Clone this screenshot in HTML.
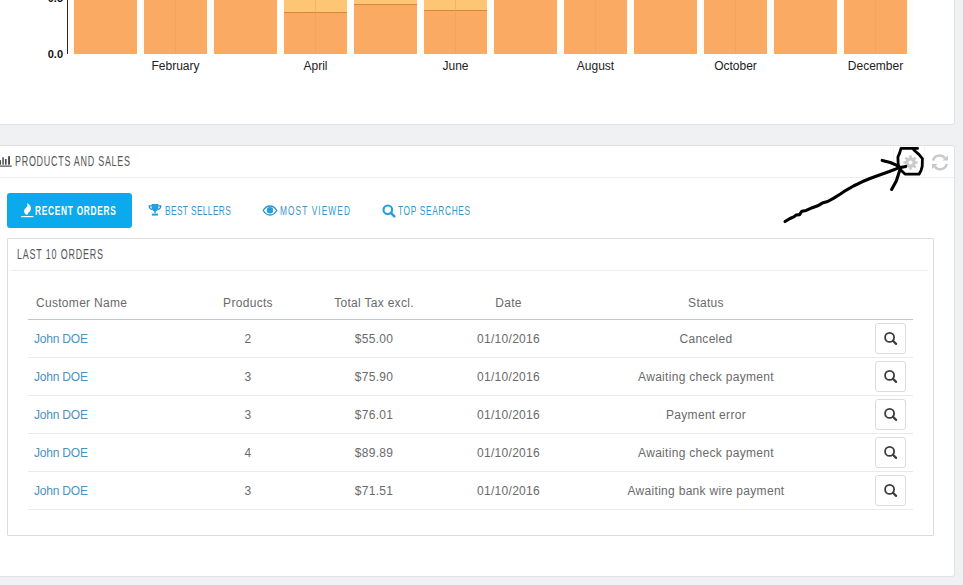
<!DOCTYPE html>
<html><head><meta charset="utf-8">
<style>
html,body{margin:0;padding:0}
body{width:963px;height:585px;overflow:hidden;position:relative;background:#eff1f2;font-family:"Liberation Sans",sans-serif;}
.panel{position:absolute;background:#fff;border:1px solid #dfe1e3;border-radius:3px;box-sizing:border-box}
#p1{left:-6px;top:-20px;width:961px;height:145px}
#p2{left:-6px;top:145px;width:961px;height:432px}
.abs{position:absolute;white-space:nowrap}
.cond{display:inline-block;transform-origin:0 0}
.tab{color:#3794cb;font-size:13px}
.th{font-size:12px;color:#6a6a6a;line-height:16px;letter-spacing:0.3px}
.td{font-size:12px;color:#6a6a6a;line-height:16px;letter-spacing:0.3px}
.lnk{color:#4a92c2;letter-spacing:-0.2px}
.btn{position:absolute;left:875px;width:31px;height:31px;box-sizing:border-box;border:1px solid #dcdcdc;border-radius:3px;background:#fff}
.rowline{position:absolute;left:28px;width:885px;height:1px;background:#eaeaea}
.head{font-size:14px;color:#555;line-height:16px}
</style></head>
<body>
<div class="panel" id="p1"></div>
<div class="panel" id="p2"></div>
<svg class="abs" style="left:0;top:0" width="963" height="130">
<rect x="68" y="-5" width="845" height="59" fill="#fffdf8"/>
<rect x="74" y="-5" width="63" height="59" fill="#faaa62"/><rect x="144" y="-5" width="63" height="59" fill="#faaa62"/><rect x="214" y="-5" width="63" height="59" fill="#faaa62"/><rect x="284" y="-5" width="63" height="59" fill="#faaa62"/><rect x="354" y="-5" width="63" height="59" fill="#faaa62"/><rect x="424" y="-5" width="63" height="59" fill="#faaa62"/><rect x="494" y="-5" width="63" height="59" fill="#faaa62"/><rect x="564" y="-5" width="63" height="59" fill="#faaa62"/><rect x="634" y="-5" width="63" height="59" fill="#faaa62"/><rect x="704" y="-5" width="63" height="59" fill="#faaa62"/><rect x="774" y="-5" width="63" height="59" fill="#faaa62"/><rect x="844" y="-5" width="63" height="59" fill="#faaa62"/><rect x="284" y="-5" width="63" height="17" fill="#fcc674"/><rect x="284" y="12" width="63" height="1" fill="#d9863a"/><rect x="354" y="-5" width="63" height="9" fill="#fcc674"/><rect x="354" y="4" width="63" height="1" fill="#d9863a"/><rect x="424" y="-5" width="63" height="15" fill="#fcc674"/><rect x="424" y="10" width="63" height="1" fill="#d9863a"/><rect x="175" y="-5" width="1" height="59" fill="#e8a060" opacity="0.45"/><rect x="315" y="-5" width="1" height="59" fill="#e8a060" opacity="0.45"/><rect x="455" y="-5" width="1" height="59" fill="#e8a060" opacity="0.45"/><rect x="595" y="-5" width="1" height="59" fill="#e8a060" opacity="0.45"/><rect x="735" y="-5" width="1" height="59" fill="#e8a060" opacity="0.45"/><rect x="875" y="-5" width="1" height="59" fill="#e8a060" opacity="0.45"/>
<rect x="67" y="-5" width="1" height="59" fill="#2a2a2a"/>

<text x="63" y="58" text-anchor="end" font-size="11" font-weight="bold" fill="#111">0.0</text>
<text x="63" y="2" text-anchor="end" font-size="11" font-weight="bold" fill="#111">0.5</text>
<text x="175.5" y="70" text-anchor="middle" font-size="12" fill="#222">February</text><text x="315.5" y="70" text-anchor="middle" font-size="12" fill="#222">April</text><text x="455.5" y="70" text-anchor="middle" font-size="12" fill="#222">June</text><text x="595.5" y="70" text-anchor="middle" font-size="12" fill="#222">August</text><text x="735.5" y="70" text-anchor="middle" font-size="12" fill="#222">October</text><text x="875.5" y="70" text-anchor="middle" font-size="12" fill="#222">December</text>
</svg>
<!-- panel 2 heading -->
<div class="abs" style="left:0;top:177px;width:954px;height:1px;background:#eee"></div>
<div class="abs" style="left:893px;top:146px;width:1px;height:31px;background:#f4f4f4"></div>
<div class="abs" style="left:924px;top:146px;width:1px;height:31px;background:#f4f4f4"></div>
<svg class="abs" style="left:0;top:156px" width="12" height="11" viewBox="0 0 12 11"><g fill="#4a4a4a"><rect x="0" y="9.5" width="11.7" height="1.2"/><rect x="0" y="4.2" width="1" height="4.5"/><rect x="2.3" y="1.3" width="1.5" height="7.4"/><rect x="5" y="3" width="1.6" height="5.7"/><rect x="8.1" y="0.2" width="1.9" height="8.5"/></g></svg>
<div class="abs head" style="left:15px;top:153px"><span class="cond" style="transform:scaleX(0.64);letter-spacing:1.143px">PRODUCTS AND SALES</span></div>
<svg class="abs" style="left:903px;top:155px" width="15" height="15" viewBox="0 0 15 15">
<g fill="#cacaca"><circle cx="7.5" cy="7.5" r="5.2"/><rect x="6.2" y="0.3" width="2.6" height="14.4" rx="0.6" transform="rotate(0 7.5 7.5)"/><rect x="6.2" y="0.3" width="2.6" height="14.4" rx="0.6" transform="rotate(45 7.5 7.5)"/><rect x="6.2" y="0.3" width="2.6" height="14.4" rx="0.6" transform="rotate(90 7.5 7.5)"/><rect x="6.2" y="0.3" width="2.6" height="14.4" rx="0.6" transform="rotate(135 7.5 7.5)"/></g><circle cx="7.5" cy="7.5" r="2.1" fill="#fff"/></svg>
<svg class="abs" style="left:926px;top:150px" width="28" height="25" viewBox="0 0 28 25">
<g fill="none" stroke="#c9c9c9" stroke-width="2.5">
<path d="M7 10.6 C7.8 7.4 10.4 5.4 13.8 5.4 C16 5.4 17.6 6.3 19 8.2"/>
<path d="M20.8 14 C20 17.2 17.4 19.2 14 19.2 C11.8 19.2 10.2 18.3 8.8 16.4"/>
</g>
<g fill="#c9c9c9">
<path d="M22 5.4 L22 10.6 L16.4 10.6 Z"/>
<path d="M6 13.9 L11.6 13.9 L6 19.1 Z"/>
</g>
</svg>
<!-- tabs -->
<div class="abs" style="left:7px;top:193px;width:125px;height:35px;background:#0aaaed;border-radius:3px"></div>
<div class="abs tab" style="left:35px;top:203px;color:#fff;font-weight:bold"><span class="cond" style="transform:scaleX(0.64);letter-spacing:1.145px">RECENT ORDERS</span></div>
<div class="abs tab" style="left:165px;top:203px"><span class="cond" style="transform:scaleX(0.64);letter-spacing:0.634px">BEST SELLERS</span></div>
<div class="abs tab" style="left:280px;top:203px"><span class="cond" style="transform:scaleX(0.64);letter-spacing:1.707px">MOST VIEWED</span></div>
<div class="abs tab" style="left:398px;top:203px"><span class="cond" style="transform:scaleX(0.64);letter-spacing:1.020px">TOP SEARCHES</span></div>

<svg class="abs" style="left:21px;top:202px" width="13" height="16" viewBox="0 0 13 16">
<path d="M6.2 1 C8.2 2 10 4 10 6.6 C10 8.6 8.6 9.6 7.6 10.6 C7 11.2 6.6 12 6.3 13 C4.6 12.6 3.1 11.2 3.1 9 C3.1 7 5.1 6 6.2 4.6 C6.6 3.6 6.5 2.2 6.2 1 Z" fill="#fff"/>
<rect x="0.2" y="14" width="12.3" height="1.2" fill="#fff"/>
</svg>
<svg class="abs" style="left:148px;top:203px" width="14" height="13" viewBox="0 0 14 13">
<g fill="#1ea3dc">
<path d="M3.5 1 H10.5 V3.5 C10.5 6.5 9 8 7.7 8.4 V10.2 H6.3 V8.4 C5 8 3.5 6.5 3.5 3.5 Z"/>
<rect x="4" y="10.6" width="6" height="2"/>
</g>
<path d="M3.6 2.8 H1.2 C1.2 5 2.3 6.2 4.3 6.6 M10.4 2.8 H12.8 C12.8 5 11.7 6.2 9.7 6.6" fill="none" stroke="#2a8fc4" stroke-width="1.2"/>
</svg>
<svg class="abs" style="left:262px;top:205px" width="16" height="11" viewBox="0 0 16 11">
<path d="M1.2 5.5 C3 2.4 5.3 1 8 1 C10.7 1 13 2.4 14.8 5.5 C13 8.6 10.7 10 8 10 C5.3 10 3 8.6 1.2 5.5 Z" fill="none" stroke="#2a90c8" stroke-width="1.3"/>
<circle cx="8" cy="5.2" r="3.2" fill="#1ea3dc"/>
</svg>
<svg class="abs" style="left:382px;top:204px" width="14" height="14" viewBox="0 0 14 14">
<circle cx="5.8" cy="5.8" r="4.3" fill="none" stroke="#2a9fd6" stroke-width="2.2"/>
<line x1="8.9" y1="8.9" x2="12.3" y2="12.3" stroke="#2a9fd6" stroke-width="2.6" stroke-linecap="round"/>
</svg>
<!-- inner panel -->
<div class="abs" style="left:7px;top:238px;width:927px;height:298px;box-sizing:border-box;border:1px solid #dcdcdc;border-radius:1px;background:#fff"></div>
<div class="abs" style="left:11px;top:270px;width:917px;height:1px;background:#eee"></div>
<div class="abs head" style="left:17px;top:246px"><span class="cond" style="transform:scaleX(0.64);letter-spacing:1.264px">LAST 10 ORDERS</span></div>
<div class="abs th" style="left:36px;top:295px">Customer Name</div><div class="abs th" style="left:98px;top:295px;width:300px;text-align:center">Products</div><div class="abs th" style="left:224px;top:295px;width:300px;text-align:center">Total Tax excl.</div><div class="abs th" style="left:358.5px;top:295px;width:300px;text-align:center">Date</div><div class="abs th" style="left:556px;top:295px;width:300px;text-align:center">Status</div><div class="abs" style="left:28px;top:319px;width:885px;height:1px;background:#b5cbd2"></div><div class="abs td lnk" style="left:34px;top:331px">John DOE</div><div class="abs td" style="left:98px;top:331px;width:300px;text-align:center">2</div><div class="abs td" style="left:224px;top:331px;width:300px;text-align:center">$55.00</div><div class="abs td" style="left:358.5px;top:331px;width:300px;text-align:center">01/10/2016</div><div class="abs td" style="left:556px;top:331px;width:300px;text-align:center">Canceled</div><div class="btn" style="top:323px"><svg width="14" height="14" viewBox="0 0 14 14" style="position:absolute;left:8px;top:8px"><circle cx="5.6" cy="5.4" r="4.5" fill="none" stroke="#3c3c3c" stroke-width="1.8"/><line x1="8.9" y1="8.7" x2="12.1" y2="11.9" stroke="#3c3c3c" stroke-width="2.2" stroke-linecap="round"/></svg></div><div class="rowline" style="top:357px"></div><div class="abs td lnk" style="left:34px;top:369px">John DOE</div><div class="abs td" style="left:98px;top:369px;width:300px;text-align:center">3</div><div class="abs td" style="left:224px;top:369px;width:300px;text-align:center">$75.90</div><div class="abs td" style="left:358.5px;top:369px;width:300px;text-align:center">01/10/2016</div><div class="abs td" style="left:556px;top:369px;width:300px;text-align:center">Awaiting check payment</div><div class="btn" style="top:361px"><svg width="14" height="14" viewBox="0 0 14 14" style="position:absolute;left:8px;top:8px"><circle cx="5.6" cy="5.4" r="4.5" fill="none" stroke="#3c3c3c" stroke-width="1.8"/><line x1="8.9" y1="8.7" x2="12.1" y2="11.9" stroke="#3c3c3c" stroke-width="2.2" stroke-linecap="round"/></svg></div><div class="rowline" style="top:395px"></div><div class="abs td lnk" style="left:34px;top:407px">John DOE</div><div class="abs td" style="left:98px;top:407px;width:300px;text-align:center">3</div><div class="abs td" style="left:224px;top:407px;width:300px;text-align:center">$76.01</div><div class="abs td" style="left:358.5px;top:407px;width:300px;text-align:center">01/10/2016</div><div class="abs td" style="left:556px;top:407px;width:300px;text-align:center">Payment error</div><div class="btn" style="top:399px"><svg width="14" height="14" viewBox="0 0 14 14" style="position:absolute;left:8px;top:8px"><circle cx="5.6" cy="5.4" r="4.5" fill="none" stroke="#3c3c3c" stroke-width="1.8"/><line x1="8.9" y1="8.7" x2="12.1" y2="11.9" stroke="#3c3c3c" stroke-width="2.2" stroke-linecap="round"/></svg></div><div class="rowline" style="top:433px"></div><div class="abs td lnk" style="left:34px;top:445px">John DOE</div><div class="abs td" style="left:98px;top:445px;width:300px;text-align:center">4</div><div class="abs td" style="left:224px;top:445px;width:300px;text-align:center">$89.89</div><div class="abs td" style="left:358.5px;top:445px;width:300px;text-align:center">01/10/2016</div><div class="abs td" style="left:556px;top:445px;width:300px;text-align:center">Awaiting check payment</div><div class="btn" style="top:437px"><svg width="14" height="14" viewBox="0 0 14 14" style="position:absolute;left:8px;top:8px"><circle cx="5.6" cy="5.4" r="4.5" fill="none" stroke="#3c3c3c" stroke-width="1.8"/><line x1="8.9" y1="8.7" x2="12.1" y2="11.9" stroke="#3c3c3c" stroke-width="2.2" stroke-linecap="round"/></svg></div><div class="rowline" style="top:471px"></div><div class="abs td lnk" style="left:34px;top:483px">John DOE</div><div class="abs td" style="left:98px;top:483px;width:300px;text-align:center">3</div><div class="abs td" style="left:224px;top:483px;width:300px;text-align:center">$71.51</div><div class="abs td" style="left:358.5px;top:483px;width:300px;text-align:center">01/10/2016</div><div class="abs td" style="left:556px;top:483px;width:300px;text-align:center">Awaiting bank wire payment</div><div class="btn" style="top:475px"><svg width="14" height="14" viewBox="0 0 14 14" style="position:absolute;left:8px;top:8px"><circle cx="5.6" cy="5.4" r="4.5" fill="none" stroke="#3c3c3c" stroke-width="1.8"/><line x1="8.9" y1="8.7" x2="12.1" y2="11.9" stroke="#3c3c3c" stroke-width="2.2" stroke-linecap="round"/></svg></div><div class="rowline" style="top:509px"></div>
<svg class="abs" style="left:0;top:0" width="963" height="585">
<g fill="none" stroke="#000" stroke-width="3.1" stroke-linecap="round" stroke-linejoin="round">
<polyline points="785,221.5 790,218.5 793.8,216.9 796.2,215 799.6,214.6 801.9,211.2 806.2,210.4 812.3,207.7 817.7,205.8 822.3,203.1 827.7,201.5 833.8,198.1 840.8,193.8 845.9,190.3 853.5,186 862.1,181.8 870.6,178.3 880.9,174.5 889.4,171.5 898,168.1 905.7,166.4"/>
<polyline points="882.2,160.4 890.3,162.5 896.3,165.1 899.7,167.2"/>
<polyline points="891.6,189.4 896.3,180.9 898.8,173.2 900.6,168.1"/>
<polyline stroke-width="2.8" points="917.6,148.4 901,148.4 899.6,153.1 897.9,157 898.2,164.7 900.5,169.8 905,174 919,174.2 921,170.6 922.2,166.4 922.4,158.7 918.9,154.4 915,151 913.4,149.3"/>
</g></svg>
</body></html>
